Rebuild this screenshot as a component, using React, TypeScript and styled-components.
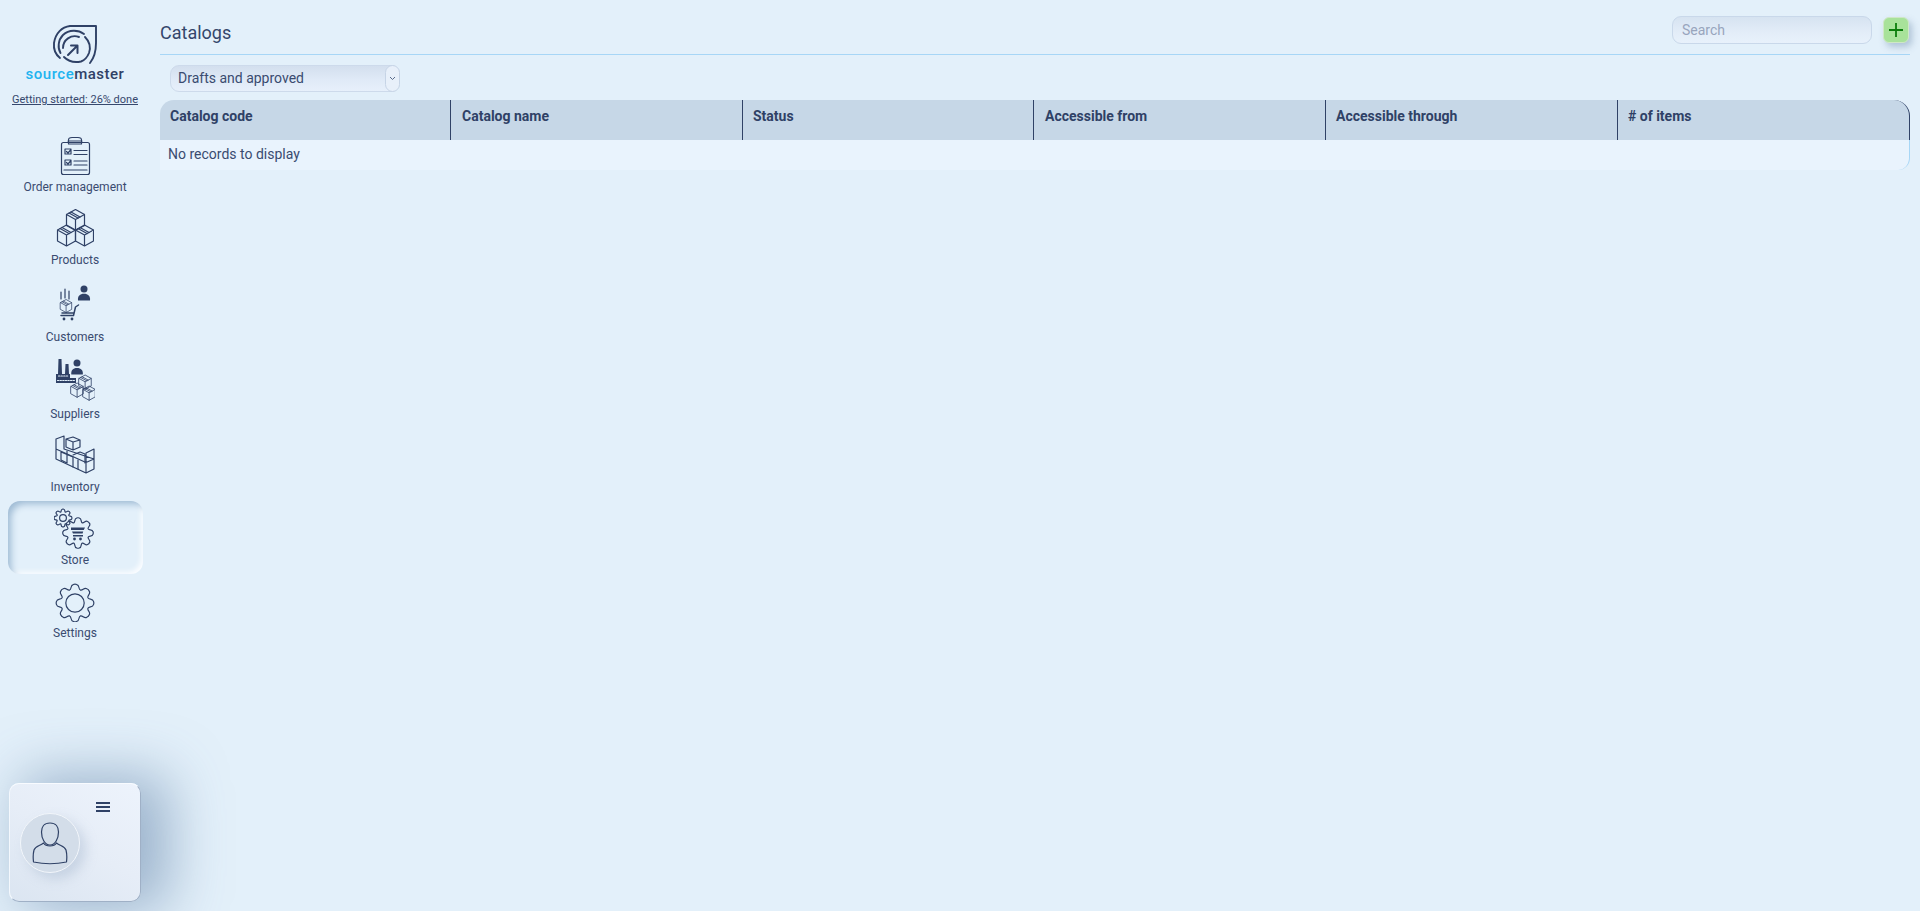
import React from "react";
import styled, { createGlobalStyle } from "styled-components";

const ink = "#2f4166";

const GlobalStyle = createGlobalStyle`
  html, body {
    margin: 0;
    height: 100%;
    overflow: hidden;
    background: #e3f0fa;
    font-family: Roboto, "Liberation Sans", sans-serif;
    color: ${ink};
  }
`;

const Page = styled.div`
  display: flex;
  height: 911px;
`;

const Sidebar = styled.aside`
  width: 150px;
  flex: none;
  display: flex;
  flex-direction: column;
  align-items: center;
  padding: 22px 0 9px;
  box-sizing: border-box;
`;

const LogoLink = styled.a`
  display: flex;
  flex-direction: column;
  align-items: center;
  color: ${ink};
  text-decoration: none;
  margin-bottom: 22px;
`;

const LogoName = styled.div`
  font-size: 15px;
  font-weight: 500;
  line-height: 18px;
  letter-spacing: 0.5px;
  margin-top: -1px;
  color: ${ink};
`;

const LogoAccent = styled.span`
  color: #1eb4f0;
`;

const Progress = styled.div`
  font-size: 11px;
  line-height: 13px;
  margin-top: 10px;
  text-decoration: underline;
  color: #37486d;
`;

const NavList = styled.nav`
  display: flex;
  flex-direction: column;
  align-items: center;
  width: 135px;
`;

const NavItem = styled.a<{ $tall?: boolean; $active?: boolean }>`
  display: flex;
  flex-direction: column;
  align-items: center;
  justify-content: flex-end;
  width: 135px;
  height: ${(p) => (p.$tall ? 77 : 73)}px;
  padding-bottom: 6px;
  box-sizing: border-box;
  border-radius: 12px;
  font-size: 12px;
  line-height: 16px;
  color: #3a4b70;
  box-shadow: ${(p) =>
    p.$active
      ? "inset 5px 5px 7px -2px #9fbbd4, inset -4px -4px 5px -2px #fbfdff"
      : "none"};
`;

const NavLabel = styled.span`
  margin-top: 3px;
`;

const Glyph = styled.svg`
  display: block;
  flex: none;
  fill: none;
  stroke: ${ink};
  stroke-width: 1.2;
  stroke-linejoin: round;
  stroke-linecap: round;
`;

const Solid = styled.g`
  fill: ${ink};
  stroke: none;
`;

const AccountCard = styled.section`
  margin-top: auto;
  width: 132px;
  height: 119px;
  box-sizing: border-box;
  padding: 18px 11px 0 11px;
  border-radius: 10px;
  display: flex;
  flex-direction: column;
  background: linear-gradient(30deg, #dbe5f1 0%, #e6edf7 50%, #edf3fc 100%);
  border-top: 1px solid #f8fbff;
  border-left: 1px solid #f4f8fd;
  border-right: 1px solid #9fb0c6;
  border-bottom: 1px solid #9fb0c6;
  box-shadow: 20px 0 55px 8px rgba(85, 120, 160, 0.5);
`;

const MenuButton = styled.div`
  align-self: flex-end;
  width: 14px;
  height: 10px;
  margin-right: 19px;
  display: flex;
  flex-direction: column;
  justify-content: space-between;
`;

const MenuBar = styled.span`
  display: block;
  height: 2px;
  background: ${ink};
`;

const Avatar = styled.div`
  width: 60px;
  height: 60px;
  margin-top: 1px;
  margin-left: -1px;
  box-sizing: border-box;
  border-radius: 50%;
  border: 1px solid #f2f6fb;
  background: #d3dde9;
  box-shadow: 6px 6px 12px rgba(150, 170, 195, 0.35);
  display: flex;
  align-items: center;
  justify-content: center;
`;

const Main = styled.main`
  flex: 1;
  min-width: 0;
  padding: 0 10px 0 10px;
`;

const Header = styled.header`
  height: 55px;
  box-sizing: border-box;
  border-bottom: 1px solid #a7d6f6;
  display: flex;
  align-items: center;
  justify-content: space-between;
`;

const Title = styled.h1`
  margin: 12px 0 0;
  font-size: 18px;
  font-weight: 400;
  line-height: 22px;
  color: #34466b;
`;

const HeaderTools = styled.div`
  display: flex;
  align-items: center;
  gap: 11px;
  margin: 6px 1px 0 0;
`;

const SearchInput = styled.input`
  width: 200px;
  height: 28px;
  box-sizing: border-box;
  padding: 0 9px;
  border: 1px solid #c9d8ea;
  border-radius: 9px;
  outline: none;
  background: linear-gradient(180deg, #d6e3f1 0%, #e3edf8 60%, #e8f1fb 100%);
  font: 14px Roboto, "Liberation Sans", sans-serif;
  color: ${ink};
  &::placeholder {
    color: #98a5bd;
    opacity: 1;
  }
`;

const AddButton = styled.button`
  width: 26px;
  height: 26px;
  padding: 0;
  border: 1px solid #cfe8c6;
  border-radius: 6px;
  background: #a8e29a;
  box-shadow: 3px 4px 7px rgba(110, 140, 170, 0.45);
  display: flex;
  align-items: center;
  justify-content: center;
`;

const FilterBar = styled.div`
  padding: 10px 0 8px 10px;
`;

const SelectWrap = styled.div`
  position: relative;
  width: 230px;
  height: 27px;
`;

const FilterSelect = styled.select`
  appearance: none;
  width: 100%;
  height: 100%;
  box-sizing: border-box;
  padding: 0 20px 2px 7px;
  border: 1px solid #cddaeb;
  border-radius: 9px;
  outline: none;
  background: linear-gradient(180deg, #d3dfee 0%, #e0eaf7 55%, #e7f0fb 100%);
  font: 14px Roboto, "Liberation Sans", sans-serif;
  color: #3a4b70;
`;

const SelectArrow = styled.span`
  position: absolute;
  right: 0;
  top: 0;
  width: 15px;
  height: 27px;
  box-sizing: border-box;
  border: 1px solid #c6d4e6;
  border-radius: 8px;
  background: #e8f0fa;
  pointer-events: none;
  display: flex;
  align-items: center;
  justify-content: center;
`;

const Grid = styled.table`
  width: 100%;
  table-layout: fixed;
  border-collapse: separate;
  border-spacing: 0;
  font-size: 14px;
`;

const HeadCell = styled.th<{ $width: number; $inset: number }>`
  width: ${(p) => p.$width}px;
  height: 40px;
  box-sizing: border-box;
  padding: 7px 10px 0 ${(p) => p.$inset}px;
  vertical-align: top;
  text-align: left;
  font-weight: 700;
  font-size: 14px;
  line-height: 18px;
  background: #c6d7e7;
  border-right: 1px solid #2f4166;
  &:first-child {
    border-top-left-radius: 14px;
  }
  &:last-child {
    border-top-right-radius: 16px;
  }
`;

const EmptyCell = styled.td`
  height: 30px;
  box-sizing: border-box;
  padding: 0 8px 2px;
  background: #e9f3fd;
  color: #3a4b70;
  border-right: 1px solid #a7d6f6;
  border-bottom-right-radius: 12px;
`;

const columns = [
  { title: "Catalog code", width: 291, inset: 10 },
  { title: "Catalog name", width: 292, inset: 11 },
  { title: "Status", width: 291, inset: 10 },
  { title: "Accessible from", width: 292, inset: 11 },
  { title: "Accessible through", width: 292, inset: 10 },
  { title: "# of items", width: 292, inset: 10 },
];

// gear outline with rounded teeth
const gearPath = (cx: number, cy: number, R: number, r: number, teeth = 8) => {
  const at = (rad: number, a: number) =>
    `${(cx + rad * Math.cos(a)).toFixed(2)} ${(cy + rad * Math.sin(a)).toFixed(2)}`;
  const step = (Math.PI * 2) / teeth;
  let d = "";
  for (let i = 0; i < teeth; i++) {
    const a = i * step - Math.PI / 2;
    const start = at(r, a - step * 0.5);
    if (i === 0) d += `M${start}`;
    d += ` C${at(r * 1.02, a - step * 0.28)} ${at(R, a - step * 0.34)} ${at(R, a - step * 0.12)}`;
    d += ` Q${at(R * 1.04, a)} ${at(R, a + step * 0.12)}`;
    d += ` C${at(R, a + step * 0.34)} ${at(r * 1.02, a + step * 0.28)} ${at(r, a + step * 0.5)}`;
  }
  return d + "Z";
};

// isometric carton, scaled from an 18 x 21 drawing
const Carton = ({ x, y, s = 1 }: { x: number; y: number; s?: number }) => (
  <g transform={`translate(${x} ${y}) scale(${s})`}>
    <path d="M0 5L9 0L18 5V16L9 21L0 16ZM0 5L9 10L18 5M9 10V21" />
    <path d="M2.500 3.600L11.500 8.600M4.500 2.500L13.500 7.500" />
  </g>
);

const LogoMark = () => (
  <Glyph width="50" height="44" viewBox="50 22 50 44" style={{ strokeWidth: 1.9 }}>
    <path d="M60 58C55 54 53.500 48 54 43C55.500 33 62 27 70 26H96V43C96 51 94 58 90 63" />
    <path d="M84 34C78 29.500 69 29.500 63 35C58 40 57.500 48 60.500 53" />
    <path d="M85 37C89 41 91 47 89 53C87 58 85 60 81 61.500C74 63 68 61 64 57" />
    <path d="M79 37C71 34 63 40 63 48" />
    <path d="M68 55L77 46M71 45.500H77.500V53" style={{ strokeWidth: 2 }} />
  </Glyph>
);

const OrdersIcon = () => (
  <Glyph width="34" height="41" viewBox="58 134 34 41">
    <rect x="61.500" y="141.500" width="28" height="32" rx="2" />
    <path d="M68.500 143V139C68.500 137.500 70 136.500 72 136.500H78C80 136.500 81.500 137.500 81.500 139V143ZM68 140H82" />
    <path d="M65 148H71V153H65ZM65 159H71V164H65ZM66.500 150.500L68 152L71 148.500M66.500 161.500L68 163L71 159.500" />
    <path d="M74 149.500H87M74 153.500H87M74 160H87M74 164H87M64 169H87" />
  </Glyph>
);

const ProductsIcon = () => (
  <Glyph width="38" height="40" viewBox="55 208 38 40">
    <Carton x={65.500} y={208.500} />
    <Carton x={56.500} y={224} />
    <Carton x={74.500} y={224} />
  </Glyph>
);

const CustomersIcon = () => (
  <Glyph width="36" height="41" viewBox="58 284 36 41">
    <Solid>
      <circle cx="85" cy="288" r="3.500" />
      <path d="M79 299.500C78.500 295 81 292.800 85 292.800C89 292.800 91.500 295 91 299.500Z" />
      <circle cx="65" cy="318" r="1.400" />
      <circle cx="73" cy="318" r="1.400" />
    </Solid>
    <path d="M62 291V298M66 288V297M70 290V298" />
    <Carton x={61.500} y={298.500} s={0.62} />
    <path d="M79.500 304L76.500 306L74.500 314.500H62M74.900 312H63" style={{ strokeWidth: 1.5 }} />
  </Glyph>
);

const SuppliersIcon = () => (
  <Glyph width="40" height="45" viewBox="54 357 40 45">
    <Solid>
      <path d="M57.500 358H60.500L61 373H57ZM64.500 363H67.500L68 373H64ZM55 373H69V377H75V382H55Z" />
      <circle cx="76" cy="362" r="3.500" />
      <path d="M70.300 373.500C69.800 369.200 72 367 76 367C80 367 82.300 369.200 81.800 373.500Z" />
    </Solid>
    <path d="M57.500 375H67M56.500 379.500H74" style={{ stroke: "#e3f0fa", strokeDasharray: "1.300 1.300" }} />
    <Carton x={78} y={374} s={0.68} />
    <Carton x={70} y={382} s={0.68} />
    <Carton x={82} y={385} s={0.68} />
  </Glyph>
);

const InventoryIcon = () => (
  <Glyph width="40" height="41" viewBox="54 434 40 41">
    <path d="M55 438L63 435V448M55 438V458L85 472L93 468V448L85 452V472M55 448L85 461.500L93 458M63 448L93 458" />
    <path d="M65 438L72 436L79 439V446L72 449L65 446ZM65 438L72 441L79 439M72 441V449" />
    <path d="M60 451L72 456V466M66 450V462L60 459V451M77 459V468M84 453L79 451L72 454M84 453V462" />
  </Glyph>
);

const StoreIcon = () => (
  <Glyph width="42" height="41" viewBox="55 507 42 41">
    <path d={gearPath(64, 517, 8.800, 6.300)} />
    <circle cx="64" cy="517" r="3.400" />
    <path d={gearPath(79, 532, 15, 11)} />
    <Solid>
      <path d="M72 526.500H86L84.800 529H72ZM73 530.500H84.200L83.600 532.500H74ZM74 534H84V535.500H74Z" />
      <circle cx="75.500" cy="538" r="1.400" />
      <circle cx="81.500" cy="538" r="1.400" />
    </Solid>
  </Glyph>
);

const SettingsIcon = () => (
  <Glyph width="40" height="39" viewBox="55 582 40 39">
    <path d={gearPath(75, 602, 18.500, 14)} />
    <circle cx="75" cy="602" r="9.200" />
  </Glyph>
);

const ProfileIcon = () => (
  <Glyph width="38" height="44" viewBox="0 0 38 44">
    <path d="M19 2C13 2 10.500 6 10.500 11C10.500 17 13.500 24 19 24C24.500 24 27.500 17 27.500 11C27.500 6 25 2 19 2Z" />
    <path d="M12.500 22C9 25 4.500 25 3 29C2 33 2 37 2.500 41C12 43 26 43 35.500 41C36 37 36 33 35 29C33.500 25 29 25 25.500 22C23 26 15 26 12.500 22Z" />
  </Glyph>
);

const App = () => {
  return (
    <Page>
      <GlobalStyle />
      <Sidebar>
        <LogoLink href="#">
          <LogoMark />
          <LogoName>
            <LogoAccent>source</LogoAccent>master
          </LogoName>
          <Progress>Getting started: 26% done</Progress>
        </LogoLink>
        <NavList>
          <NavItem>
            <OrdersIcon />
            <NavLabel>Order management</NavLabel>
          </NavItem>
          <NavItem>
            <ProductsIcon />
            <NavLabel>Products</NavLabel>
          </NavItem>
          <NavItem $tall>
            <CustomersIcon />
            <NavLabel>Customers</NavLabel>
          </NavItem>
          <NavItem $tall>
            <SuppliersIcon />
            <NavLabel>Suppliers</NavLabel>
          </NavItem>
          <NavItem>
            <InventoryIcon />
            <NavLabel>Inventory</NavLabel>
          </NavItem>
          <NavItem $active>
            <StoreIcon />
            <NavLabel>Store</NavLabel>
          </NavItem>
          <NavItem>
            <SettingsIcon />
            <NavLabel>Settings</NavLabel>
          </NavItem>
        </NavList>
        <AccountCard>
          <MenuButton>
            <MenuBar />
            <MenuBar />
            <MenuBar />
          </MenuButton>
          <Avatar>
            <ProfileIcon />
          </Avatar>
        </AccountCard>
      </Sidebar>
      <Main>
        <Header>
          <Title>Catalogs</Title>
          <HeaderTools>
            <SearchInput placeholder="Search" />
            <AddButton aria-label="Add catalog">
              <svg width="16" height="16" viewBox="0 0 16 16">
                <path d="M8 1V15M1 8H15" stroke="#0b7d0b" strokeWidth="1.800" />
              </svg>
            </AddButton>
          </HeaderTools>
        </Header>
        <FilterBar>
          <SelectWrap>
            <FilterSelect defaultValue="drafts">
              <option value="drafts">Drafts and approved</option>
            </FilterSelect>
            <SelectArrow>
              <svg width="7" height="5" viewBox="0 0 7 5">
                <path d="M1 1L3.500 3.500L6 1" fill="none" stroke="#5a6c8c" strokeWidth="1" />
              </svg>
            </SelectArrow>
          </SelectWrap>
        </FilterBar>
        <Grid>
          <thead>
            <tr>
              {columns.map((c) => (
                <HeadCell key={c.title} $width={c.width} $inset={c.inset}>
                  {c.title}
                </HeadCell>
              ))}
            </tr>
          </thead>
          <tbody>
            <tr>
              <EmptyCell colSpan={6}>No records to display</EmptyCell>
            </tr>
          </tbody>
        </Grid>
      </Main>
    </Page>
  );
};

export default App;
